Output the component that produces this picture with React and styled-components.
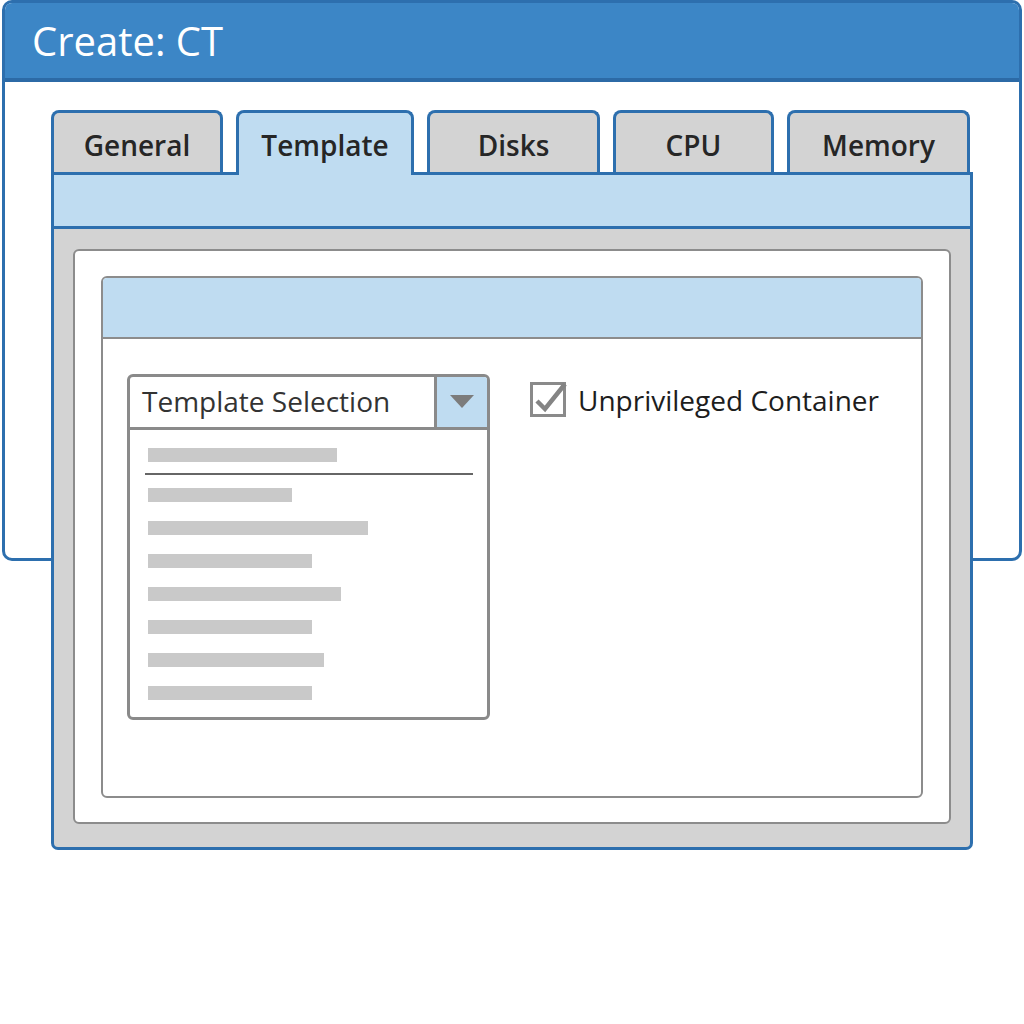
import styled, { createGlobalStyle } from "styled-components";

const GlobalStyle = createGlobalStyle`
  html, body {
    margin: 0;
    padding: 0;
    background: #ffffff;
  }
  body {
    font-family: "Open Sans", "Liberation Sans", sans-serif;
  }
  * {
    box-sizing: border-box;
  }
`;

// window frame and tab panel share one grid cell, the panel hangs over the frame's bottom edge
const Page = styled.div`
  display: grid;
  grid-template-columns: 1fr;
  grid-template-rows: auto;
  height: 1024px;
  align-items: start;
`;

const Window = styled.div`
  grid-area: 1 / 1;
  margin: 0 2px;
  height: 561px;
  border: 3px solid #2d6fae;
  border-radius: 10px;
  background: #ffffff;
`;

const TitleBar = styled.div`
  height: 79px;
  background: #3c86c6;
  border-bottom: 4px solid #2c6aa6;
  border-radius: 7px 7px 0 0;
  display: flex;
  align-items: center;
  padding-left: 27px;
`;

const Title = styled.h1`
  margin: 0;
  font-size: 40px;
  font-weight: 400;
  color: #ffffff;
`;

const Panel = styled.div`
  grid-area: 1 / 1;
  width: 922px;
  margin: 110px 0 0 51px;
`;

const TabRow = styled.div`
  display: flex;
  align-items: flex-end;
  gap: 13px;
`;

const Tab = styled.div`
  width: ${(p) => p.$w}px;
  height: ${(p) => (p.$active ? 65 : 62)}px;
  margin-bottom: ${(p) => (p.$active ? -3 : 0)}px;
  position: relative;
  z-index: ${(p) => (p.$active ? 2 : 0)};
  border: 3px solid #2d6fae;
  border-bottom: none;
  border-radius: 8px 8px 0 0;
  background: ${(p) => (p.$active ? "#bfdcf1" : "#d3d3d3")};
  display: flex;
  justify-content: center;
  align-items: flex-start;
  padding-top: 13px;
  font-size: 28px;
  font-weight: 600;
  color: #262626;
`;

const Body = styled.div`
  border: 3px solid #2d6fae;
  border-radius: 0 0 7px 7px;
  background: #d3d3d3;
`;

const Strip = styled.div`
  height: 54px;
  background: #bfdcf1;
  border-bottom: 3px solid #2d6fae;
`;

const GrayArea = styled.div`
  padding: 20px 19px 23px 19px;
`;

const Card = styled.div`
  height: 575px;
  background: #ffffff;
  border: 2px solid #8c8c8c;
  border-radius: 6px;
  padding: 25px 26px 24px 26px;
`;

const InnerCard = styled.div`
  height: 522px;
  border: 2px solid #8c8c8c;
  border-radius: 6px;
  overflow: hidden;
  background: #ffffff;
`;

const InnerHeader = styled.div`
  height: 61px;
  background: #bfdcf1;
  border-bottom: 2px solid #8c8c8c;
`;

const Content = styled.div`
  display: flex;
  align-items: flex-start;
  gap: 40px;
  padding: 35px 0 0 24px;
`;

const Combo = styled.div`
  width: 363px;
  height: 346px;
  border: 3px solid #8a8a8a;
  border-radius: 6px;
  overflow: hidden;
  background: #ffffff;
`;

const ComboHead = styled.div`
  height: 53px;
  display: flex;
  border-bottom: 3px solid #8a8a8a;
`;

const ComboText = styled.div`
  flex: 1;
  display: flex;
  align-items: center;
  padding-left: 12px;
  padding-bottom: 2px;
  font-size: 28px;
  color: #333333;
`;

const ComboButton = styled.div`
  width: 53px;
  border-left: 3px solid #8a8a8a;
  background: #bfdcf1;
  display: flex;
  align-items: center;
  justify-content: center;
`;

const List = styled.div`
  display: flex;
  flex-direction: column;
  padding: 18px 14px 0 15px;
`;

const Bar = styled.div`
  width: ${(p) => p.$w}px;
  height: 14px;
  margin-left: 3px;
  background: #c9c9c9;
  margin-bottom: 19px;
`;

const Divider = styled.div`
  height: 2px;
  background: #666666;
  margin: -8px 0 13px 0;
`;

const CheckRow = styled.label`
  display: flex;
  align-items: center;
  gap: 11px;
  margin-top: 8px;
  font-size: 28px;
  color: #1d1d1d;
  line-height: 36px;
`;

const CheckIcon = () => (
  <svg width="37" height="36" viewBox="0 0 37 36" style={{ overflow: "visible" }}>
    <rect x="1.5" y="1.5" width="33" height="32" fill="#ffffff" stroke="#8a8a8a" strokeWidth="3" />
    <polyline
      points="7,19 15,27 35,2"
      fill="none"
      stroke="#848484"
      strokeWidth="4.5"
      strokeLinejoin="miter"
    />
  </svg>
);

const tabs = [
  { label: "General", w: 172 },
  { label: "Template", w: 178, active: true },
  { label: "Disks", w: 173 },
  { label: "CPU", w: 161 },
  { label: "Memory", w: 183 },
];

const bars = [144, 220, 164, 193, 164, 176, 164];

export default function App() {
  return (
    <>
      <GlobalStyle />
      <Page>
        <Window>
          <TitleBar>
            <Title>Create: CT</Title>
          </TitleBar>
        </Window>
        <Panel>
          <TabRow>
            {tabs.map((t) => (
              <Tab key={t.label} $w={t.w} $active={t.active}>
                {t.label}
              </Tab>
            ))}
          </TabRow>
          <Body>
            <Strip />
            <GrayArea>
              <Card>
                <InnerCard>
                  <InnerHeader />
                  <Content>
                    <Combo>
                      <ComboHead>
                        <ComboText>Template Selection</ComboText>
                        <ComboButton>
                          <svg width="24" height="14" viewBox="0 0 24 14">
                            <polygon points="0,0 24,0 12,13" fill="#7c7c7c" />
                          </svg>
                        </ComboButton>
                      </ComboHead>
                      <List>
                        <Bar $w={189} />
                        <Divider />
                        {bars.map((w, i) => (
                          <Bar key={i} $w={w} />
                        ))}
                      </List>
                    </Combo>
                    <CheckRow>
                      <CheckIcon />
                      Unprivileged Container
                    </CheckRow>
                  </Content>
                </InnerCard>
              </Card>
            </GrayArea>
          </Body>
        </Panel>
      </Page>
    </>
  );
}
